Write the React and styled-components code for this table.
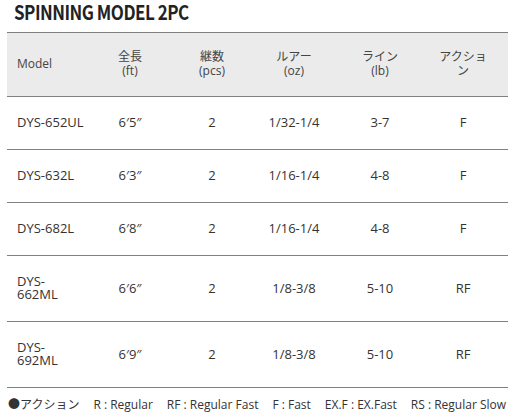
import React from 'react';
import styled, { createGlobalStyle } from 'styled-components';

const columns = [
    { key: 'model', label: ['Model'], width: 75, align: 'left' },
    { key: 'length', label: ['全長', '(ft)'], width: 96 },
    { key: 'pieces', label: ['継数', '(pcs)'], width: 68 },
    { key: 'lure', label: ['ルアー', '(oz)'], width: 96 },
    { key: 'line', label: ['ライン', '(lb)'], width: 76 },
    { key: 'action', label: ['アクショ', 'ン'], width: 90 },
];

const rods = [
    { model: ['DYS-652UL'], length: '6′5″', pieces: '2', lure: '1/32-1/4', line: '3-7', action: 'F' },
    { model: ['DYS-632L'], length: '6′3″', pieces: '2', lure: '1/16-1/4', line: '4-8', action: 'F' },
    { model: ['DYS-682L'], length: '6′8″', pieces: '2', lure: '1/16-1/4', line: '4-8', action: 'F' },
    { model: ['DYS-', '662ML'], length: '6′6″', pieces: '2', lure: '1/8-3/8', line: '5-10', action: 'RF' },
    { model: ['DYS-', '692ML'], length: '6′9″', pieces: '2', lure: '1/8-3/8', line: '5-10', action: 'RF' },
];

const legend = [
    'R : Regular',
    'RF : Regular Fast',
    'F : Fast',
    'EX.F : EX.Fast',
    'RS : Regular Slow',
];

const App = () => {
    return (
        <Page>
            <GlobalStyle />
            <Title>SPINNING MODEL 2PC</Title>
            <SpecTable>
                <colgroup>
                    {columns.map(col => (
                        <col key={col.key} style={{ width: col.width }} />
                    ))}
                </colgroup>
                <thead>
                    <HeadRow>
                        {columns.map(col => (
                            <HeadCell key={col.key} $align={col.align}>
                                {col.label.map(part => (
                                    <Line key={part}>{part}</Line>
                                ))}
                            </HeadCell>
                        ))}
                    </HeadRow>
                </thead>
                <tbody>
                    {rods.map(rod => (
                        <Row key={rod.model.join('')}>
                            <Cell $align="left">
                                {rod.model.map(part => (
                                    <Line key={part}>{part}</Line>
                                ))}
                            </Cell>
                            <Cell>{rod.length}</Cell>
                            <Cell>{rod.pieces}</Cell>
                            <Cell>{rod.lure}</Cell>
                            <Cell>{rod.line}</Cell>
                            <Cell>{rod.action}</Cell>
                        </Row>
                    ))}
                </tbody>
            </SpecTable>
            <Legend>
                <span>●アクション</span>
                {legend.map(item => (
                    <span key={item}>{item}</span>
                ))}
            </Legend>
        </Page>
    )
};

export default App;


const GlobalStyle = createGlobalStyle`
    body {
        margin: 0;
        background: #fff;
        font-family: "Open Sans", "Noto Sans CJK JP", sans-serif;
        color: #333;
    }
`

const Page = styled.div`
    width: 514px;
    padding: 0 6px 0 7px;
    box-sizing: border-box;
`

const Title = styled.h1`
    margin: -3px 0 6px 7px;
    font-family: "Noto Sans CJK JP", sans-serif;
    font-size: 20px;
    font-weight: 700;
    line-height: 29px;
    letter-spacing: -0.6px;
    color: #222;
    white-space: nowrap;
    transform: scaleX(0.85);
    transform-origin: left center;
`

const SpecTable = styled.table`
    width: 501px;
    table-layout: fixed;
    border-collapse: collapse;
    border-top: 1px solid #808080;
`

const HeadRow = styled.tr`
    background: #ebebeb;
    border-bottom: 1px solid #808080;
`

const Row = styled.tr`
    border-bottom: 1px solid #808080;
`

const HeadCell = styled.th`
    padding: 17px 0 18px ${p => (p.$align === 'left' ? '10px' : '0')};
    font-size: 12px;
    font-weight: 400;
    line-height: 14px;
    color: #444;
    text-align: ${p => p.$align || 'center'};
    vertical-align: middle;
`

const Cell = styled.td`
    padding: 19px 0 20px ${p => (p.$align === 'left' ? '10px' : '0')};
    font-size: 13px;
    line-height: 13px;
    color: #333;
    text-align: ${p => p.$align || 'center'};
    vertical-align: middle;
`

const Line = styled.span`
    display: block;
    white-space: nowrap;
`

const Legend = styled.div`
    display: flex;
    gap: 14px;
    margin-top: 9px;
    padding-left: 1px;
    font-size: 12px;
    line-height: 16px;
    color: #333;
    white-space: nowrap;
`
